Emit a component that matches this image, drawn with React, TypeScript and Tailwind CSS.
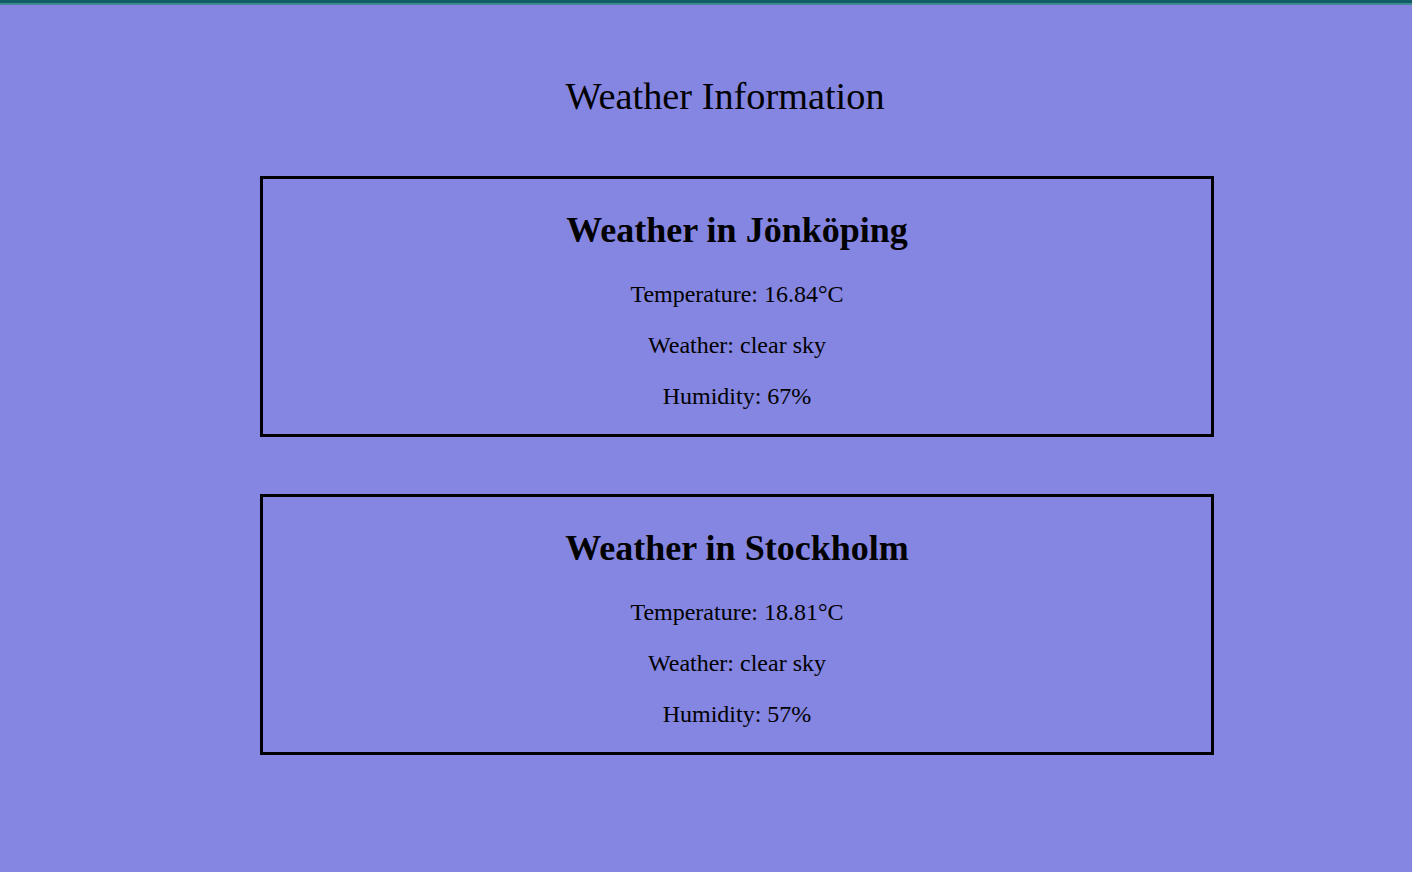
const cities = [
  { name: 'Jönköping', temp: '16.84', weather: 'clear sky', humidity: 67 },
  { name: 'Stockholm', temp: '18.81', weather: 'clear sky', humidity: 57 },
];

function WeatherCard({ name, temp, weather, humidity }: (typeof cities)[number]) {
  return (
    <div className="ml-[260px] w-[954px] border-[3px] border-black text-center">
      <h2 className="my-[29.9px] text-[36px] font-bold leading-[normal]">Weather in {name}</h2>
      <p className="my-[24px] text-[24px] leading-[normal]">Temperature: {temp}°C</p>
      <p className="my-[24px] text-[24px] leading-[normal]">Weather: {weather}</p>
      <p className="my-[24px] text-[24px] leading-[normal]">Humidity: {humidity}%</p>
    </div>
  );
}

export default function App() {
  return (
    <div className="min-h-[872px] bg-[#8586e2] text-black font-['Liberation_Serif','Times_New_Roman',serif]">
      <div className="h-[3px] bg-[#125e66]" />
      <div className="h-[2px] bg-[#3f8a90]" />
      <h1 className="pt-[69px] pl-[38px] text-center text-[38.3px] font-normal leading-[normal]">
        Weather Information
      </h1>
      <div className="mt-[58px] flex flex-col gap-[57.5px]">
        {cities.map((c) => (
          <WeatherCard key={c.name} {...c} />
        ))}
      </div>
    </div>
  );
}
